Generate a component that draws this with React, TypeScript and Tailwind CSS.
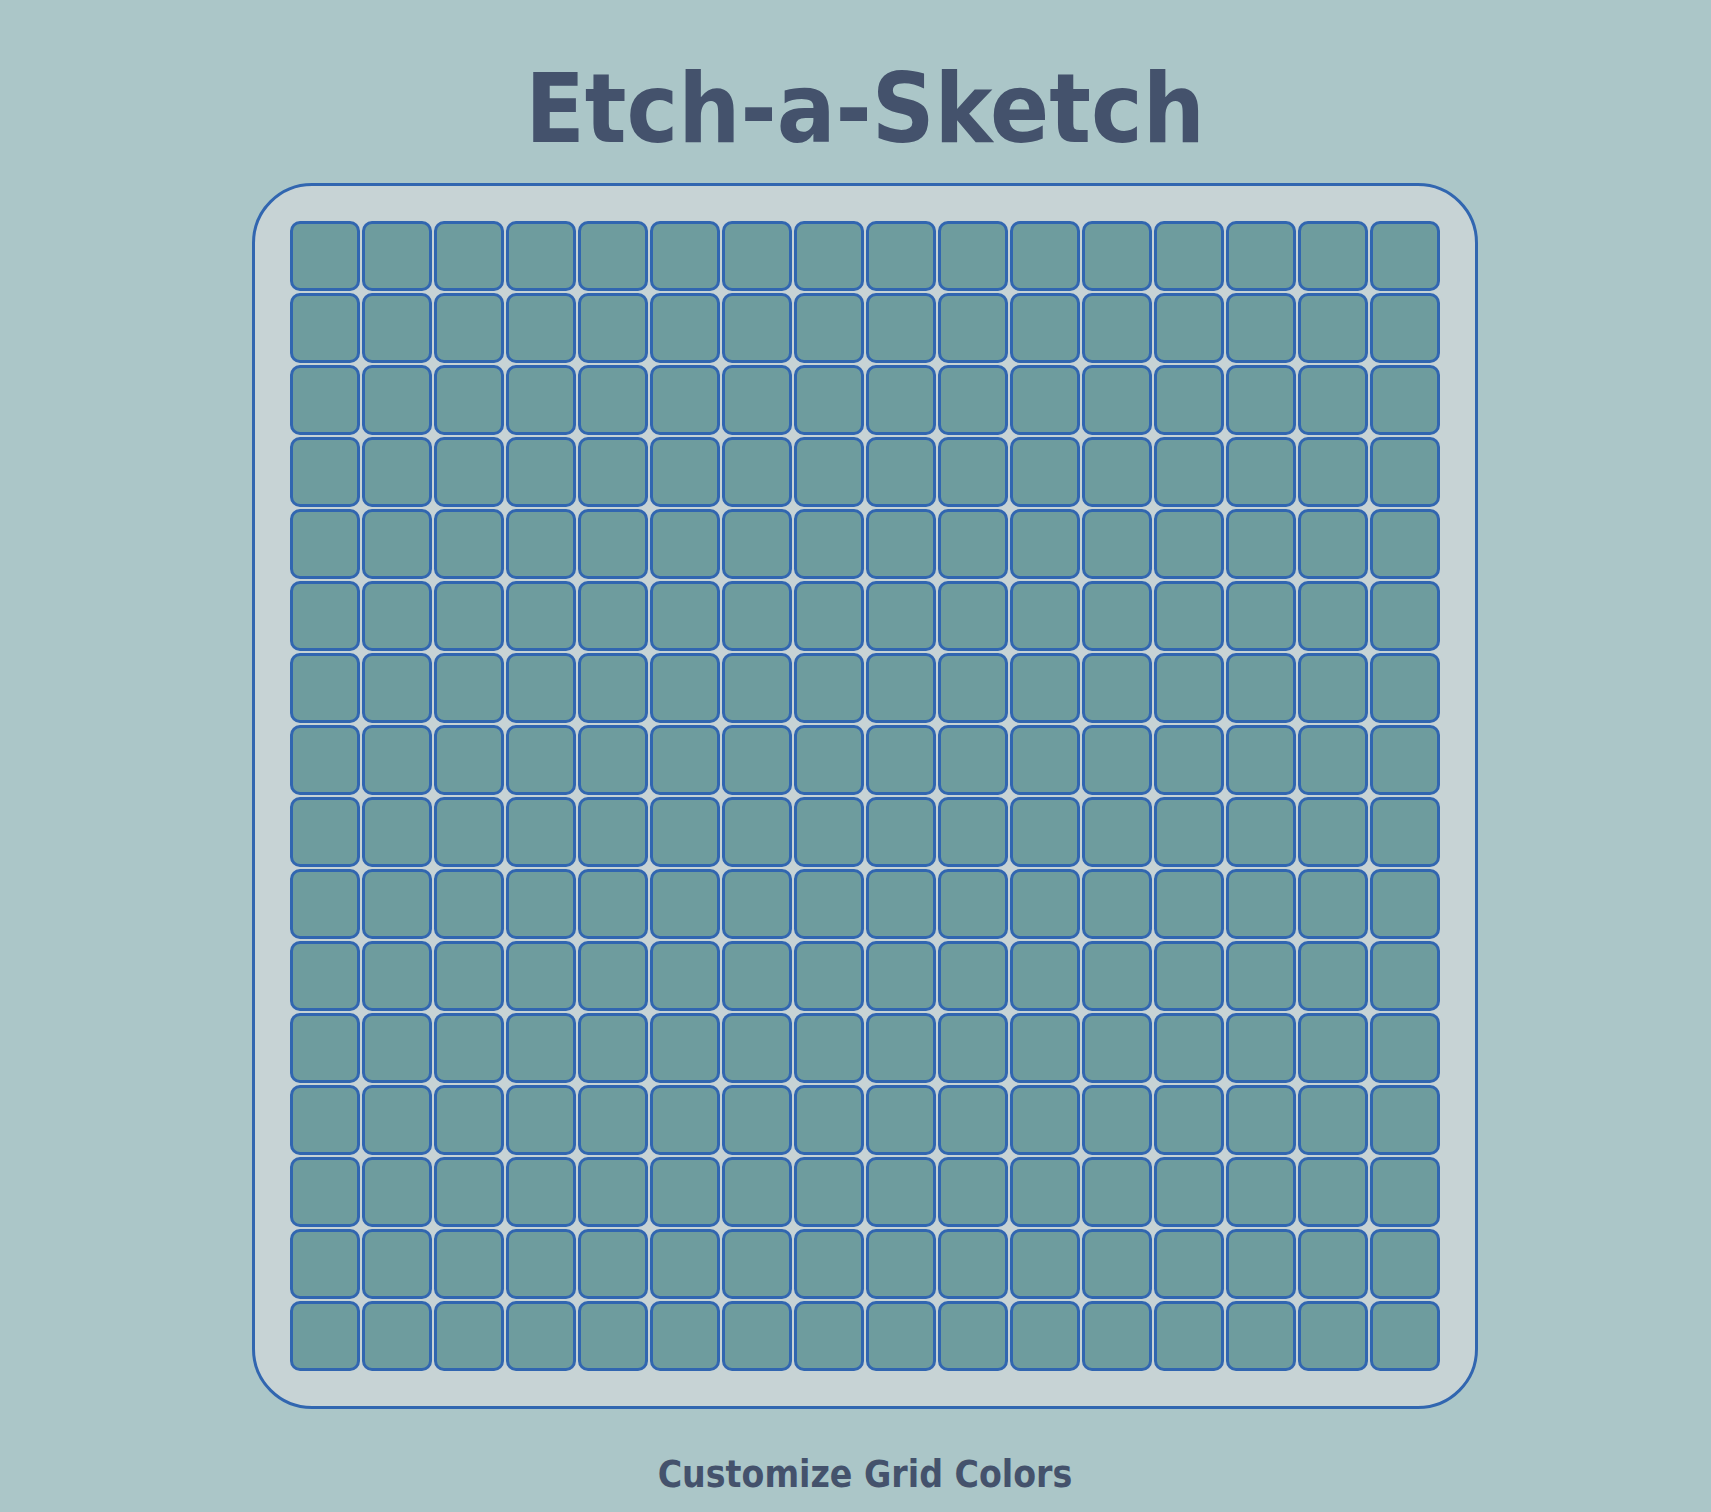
const ROWS = 16
const COLS = 16

export default function App() {
  const cells = Array.from({ length: ROWS * COLS }, (_, i) => i)

  return (
    <div
      className="min-h-screen bg-[#abc6c8] flex flex-col items-center pl-[19px]"
      style={{ fontFamily: '"DejaVu Sans Condensed", "DejaVu Sans", sans-serif' }}
    >
      <h1 className="mt-[60px] text-[97px] leading-none font-bold text-[#44526c] [font-stretch:condensed]">
        Etch-a-Sketch
      </h1>

      <div className="mt-[26px] bg-[#c7d3d5] border-[3px] border-[#3166b0] rounded-[60px] p-[35px]">
        <div className="grid grid-cols-[repeat(16,70px)] gap-[2px]">
          {cells.map((i) => (
            <div
              key={i}
              className="w-[70px] h-[70px] bg-[#6e9c9e] border-[3px] border-[#3166b0] rounded-[10px]"
            />
          ))}
        </div>
      </div>

      <p className="mt-[47px] text-[37px] leading-none font-bold text-[#44526c] [font-stretch:condensed]">
        Customize Grid Colors
      </p>
    </div>
  )
}
